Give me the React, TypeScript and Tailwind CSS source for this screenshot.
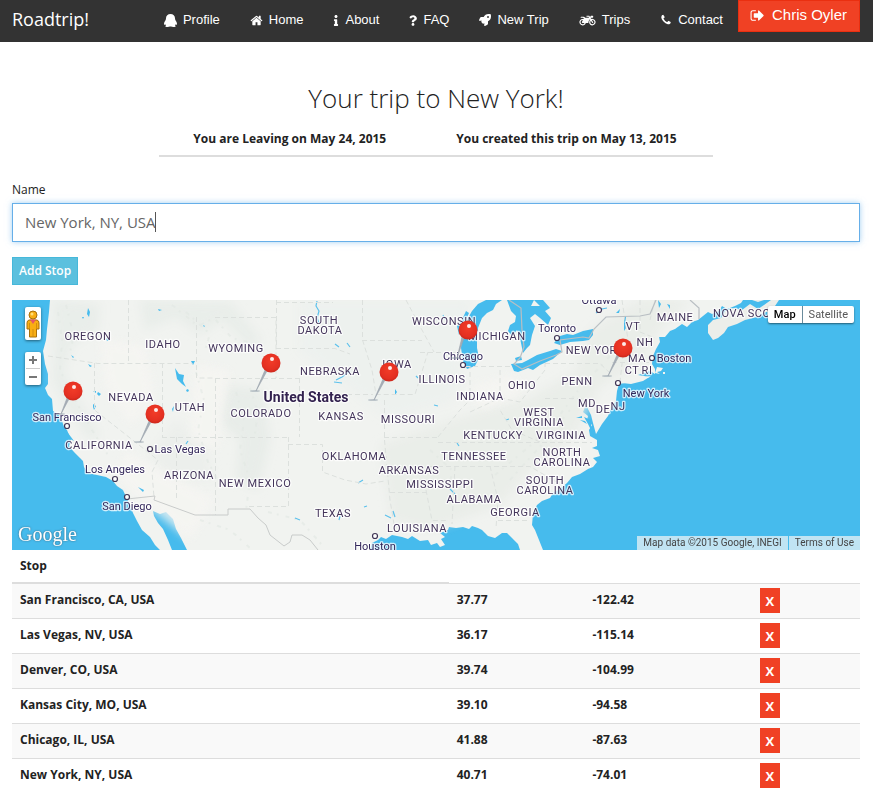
import { useState } from "react";
import type { ReactNode } from "react";
import { FaInfo, FaMotorcycle, FaQuestion, FaRocket } from "react-icons/fa";

function Glyph({ d, className }: { d: string; className: string }) {
  return (
    <svg viewBox="0 0 1792 1792" className={className} fill="currentColor" aria-hidden="true">
      <path d={d} />
    </svg>
  );
}

const HOME =
  "M1472 992v480q0 26-19 45t-45 19h-384v-384h-256v384h-384q-26 0-45-19t-19-45v-480q0-1 .5-3t.5-3l575-474 575 474q1 2 1 6zm223-69l-62 74q-8 9-21 11h-3q-13 0-21-7l-692-577-692 577q-12 8-24 7-13-2-21-11l-62-74q-8-10-7-23.5t11-21.5l719-599q32-26 76-26t76 26l244 204v-195q0-14 9-23t23-9h192q14 0 23 9t9 23v408l219 182q10 8 11 21.5t-7 23.5z";
const PHONE =
  "M1600 1240q0 27-10 70.5t-21 68.5q-21 50-122 106-94 51-186 51-27 0-53-3.5t-57.5-12.5-47-14.5-55.5-20.5-49-18q-98-35-175-83-127-79-264-216t-216-264q-48-77-83-175-3-9-18-49t-20.5-55.5-14.5-47-12.5-57.5-3.5-53q0-92 51-186 56-101 106-122 25-11 68.5-21t70.5-10q14 0 21 3 18 6 53 76 11 19 30 54t35 63.5 31 53.5q3 4 17.5 25t21.5 35.5 7 28.5q0 20-28.5 50t-62 55-62 53-28.5 46q0 9 5 22.5t8.5 20.5 14 24 11.5 19q76 137 174 235t235 174q2 1 19 11.5t24 14 20.5 8.5 22.5 5q18 0 46-28.5t53-62 55-62 50-28.5q14 0 28.5 7t35.5 21.5 25 17.5q25 15 53.5 31t63.5 35 54 30q70 35 76 53 3 7 3 21z";
const SIGN_OUT =
  "M704 1440q0 4 1 20t.5 26.5-3 23.5-10 19.5-20.5 6.5h-320q-119 0-203.5-84.5t-84.5-203.5v-704q0-119 84.5-203.5t203.5-84.5h320q13 0 22.5 9.5t9.5 22.5q0 4 1 20t.5 26.5-3 23.5-10 19.5-20.5 6.5h-320q-66 0-113 47t-47 113v704q0 66 47 113t113 47h312l11.5 1 11.5 3 8 5.5 7 9 2 13.5zm928-544q0 26-19 45l-544 544q-19 19-45 19t-45-19-19-45v-288h-448q-26 0-45-19t-19-45v-384q0-26 19-45t45-19h448v-288q0-26 19-45t45-19 45 19l544 544q19 19 19 45z";

function ProfileIcon() {
  return (
    <svg viewBox="0 0 13 13" className="h-[13px] w-[13px]" fill="currentColor" aria-hidden="true">
      <path d="M6.5 0C9.200 0 11 1.800 11 4.300c0 .8.1 1.300.5 2 .8 1.200 1.500 2.400 1.500 3.600 0 .8-.4 1.100-.9.700l-.4-.3c-.2.6-.4 1-.8 1.300.5.2.8.4.8.7 0 .5-.8.7-2.200.7-1.200 0-2-.2-2.400-.5h-1.200c-.4.3-1.200.5-2.400.5-1.400 0-2.200-.2-2.200-.7 0-.3.3-.5.8-.7-.4-.3-.6-.7-.8-1.300l-.4.3c-.5.400-.9.1-.9-.7 0-1.200.7-2.400 1.500-3.600.4-.7.5-1.200.5-2C2 1.800 3.800 0 6.500 0z" />
    </svg>
  );
}

const links: { label: string; icon: ReactNode }[] = [
  { label: "Profile", icon: <ProfileIcon /> },
  { label: "Home", icon: <Glyph d={HOME} className="h-[13px] w-[13px]" /> },
  { label: "About", icon: <FaInfo className="h-[11px] w-[6px]" /> },
  { label: "FAQ", icon: <FaQuestion className="h-[11px] w-[8px]" /> },
  { label: "New Trip", icon: <FaRocket className="h-3 w-3" /> },
  { label: "Trips", icon: <FaMotorcycle className="h-[13px] w-[17px]" /> },
  { label: "Contact", icon: <Glyph d={PHONE} className="h-[14px] w-3" /> },
];

function TopBar() {
  return (
    <header className="flex h-[42px] items-start bg-[#333] pr-[13px] pl-3 text-white">
      <a href="#" className="text-[18px] leading-[38px]">
        Roadtrip!
      </a>
      <nav className="ml-auto flex font-['Liberation_Sans',Arial,sans-serif] text-[13px]">
        {links.map((l) => (
          <a key={l.label} href="#" className="flex h-10 items-center gap-1.5 px-[15px] whitespace-nowrap">
            {l.icon}
            {l.label}
          </a>
        ))}
      </nav>
      <button className="flex h-8 items-center gap-[7px] border border-[#ea2f10] bg-[#f04124] pr-3 pb-0.5 pl-[11px] font-['Liberation_Sans',Arial,sans-serif] text-[15px] whitespace-nowrap">
        <Glyph d={SIGN_OUT} className="h-[15px] w-[15px]" />
        Chris Oyler
      </button>
    </header>
  );
}

const states: [string, number, number][] = [
  ["OREGON", 88, 340],
  ["IDAHO", 163, 348],
  ["WYOMING", 236, 352],
  ["SOUTH", 319, 324],
  ["DAKOTA", 320, 334],
  ["NEBRASKA", 330, 375],
  ["UTAH", 190, 411],
  ["NEVADA", 131, 401],
  ["CALIFORNIA", 99, 449],
  ["ARIZONA", 189, 479],
  ["NEW MEXICO", 255, 487],
  ["COLORADO", 261, 417],
  ["KANSAS", 341, 420],
  ["OKLAHOMA", 354, 460],
  ["TEXAS", 333, 517],
  ["MISSOURI", 408, 423],
  ["ARKANSAS", 409, 474],
  ["MISSISSIPPI", 440, 488],
  ["LOUISIANA", 417, 532],
  ["ALABAMA", 474, 503],
  ["GEORGIA", 515, 516],
  ["TENNESSEE", 474, 460],
  ["KENTUCKY", 493, 439],
  ["INDIANA", 480, 400],
  ["ILLINOIS", 442, 383],
  ["IOWA", 397, 368],
  ["WISCONSIN", 444, 325],
  ["MICHIGAN", 497, 340],
  ["OHIO", 522, 389],
  ["PENN", 577, 385],
  ["NEW YORK", 595, 354],
  ["WEST", 539, 416],
  ["VIRGINIA", 539, 426],
  ["VIRGINIA", 561, 439],
  ["NORTH", 562, 456],
  ["CAROLINA", 562, 466],
  ["SOUTH", 545, 484],
  ["CAROLINA", 545, 494],
  ["MD", 587, 407],
  ["DE", 603, 413],
  ["NJ", 618, 410],
  ["CT", 632, 374],
  ["RI", 647, 374],
  ["MA", 637, 362],
  ["NH", 645, 346],
  ["VT", 633, 330],
  ["MAINE", 675, 321],
  ["NOVA SCOTIA", 751, 317],
];

// name, label centre, label baseline, dot centre
const cities: [string, number, number, number, number][] = [
  ["San Francisco", 67, 421, 67, 426],
  ["Los Angeles", 115, 473, 115, 479],
  ["San Diego", 127, 510, 127, 497],
  ["Las Vegas", 180, 453, 150, 449],
  ["Chicago", 463, 360, 463, 365],
  ["Toronto", 557, 332, 557, 338],
  ["Ottawa", 599, 304, 599, 310],
  ["Boston", 674, 362, 652, 358],
  ["New York", 646, 397, 618, 383],
  ["Houston", 375, 550, 375, 536],
];

// ball centre, needle tip
const pins: [number, number, number, number][] = [
  [73, 391, 61, 414],
  [155, 414, 140, 442],
  [271, 363, 256, 391],
  [389, 372, 374, 400],
  [468, 330, 457, 358],
  [623, 348, 608, 376],
];

function MapArt() {
  return (
    <svg
      viewBox="12 300 848 250"
      preserveAspectRatio="xMidYMid slice"
      className="block h-full w-full font-[Roboto,sans-serif]"
      role="img"
      aria-label="Map of the trip across the United States"
    >
      <defs>
        <radialGradient id="ball" cx="0.5" cy="0.4" r="0.6">
          <stop offset="0" stopColor="#f23c28" />
          <stop offset="0.75" stopColor="#e43022" />
          <stop offset="1" stopColor="#cb281c" />
        </radialGradient>
        <filter id="soft" x="-30%" y="-30%" width="160%" height="160%">
          <feGaussianBlur stdDeviation="5" />
        </filter>
        <clipPath id="landClip">
          <path d="M50 300H740L660 335L655 375L618 385L598 450L534 510L500 533L380 537L370 550H160L147 534L133 513L125 493L82 461L67 429L52 399L45 380Z" />
        </clipPath>
      </defs>
      <rect x="12" y="300" width="848" height="250" fill="#46bbed" />

      {/* continent */}
      <path
        fill="#f1f3f0"
        d="M50 300L49 312L47 329L46 340L43 351L45 364L48 374L48 384L45 388L48 395L52 399L53 411L60 416L62 421L64 427L67 430L71 440L69 446L74 452L80 458L83 461L84 467L88 473L97 475L106 477L113 481L117 486L123 490L127 499L130 505L133 513L137 521L142 530L150 537L155 545L160 550H172L168 540L163 529L158 523L154 516L153 511L160 514L166 512L173 519L176 529L181 538L187 550H370L372 543L378 540L381 537L386 539L392 535L402 537L408 539L412 536L420 541L428 540L431 545L437 543L440 547L445 545L441 539L445 537L440 533L448 530L449 527L456 528L463 527L469 529L472 526L478 528L482 530L488 536L495 538L502 533L507 533L512 538L518 544L520 550H543L539 540L535 530L532 525L533 514L537 505L542 501L550 498L553 493L560 489L567 483L572 477L580 474L588 469L593 467L597 462L593 458L600 456L598 450L592 448L597 446L597 440L590 436L589 430L592 425L587 420L588 416L583 412L586 405L591 415L593 423L596 434L602 424L608 416L611 409L616 401L617 391L619 384L625 383L640 380L650 377L644 376L638 375L645 373L650 371L655 374L655 369L652 364L653 356L656 349L660 342L659 337L665 337L670 331L675 329L682 324L687 327L692 322L698 320L703 316L708 312L712 314L719 311L722 306L727 309L735 306L741 303L743 300Z"
      />
      {/* Nova Scotia and neighbours */}
      <path
        fill="#eceeea"
        d="M725 311L733 308L742 310L750 304L758 309L764 305L771 300H779L775 306L773 310L763 313L757 317L745 320L737 324L728 327L724 333L718 338L713 340L708 333L708 325L713 320L721 318ZM752 300L758 302L764 300Z"
      />
      <path fill="#f1f3f0" d="M622 383L632 379L645 377L651 376L643 381L631 384ZM657 367L663 368L661 371L657 372L660 374L655 373ZM663 372h2v2h-2z" />

      {/* relief */}
      <g clipPath="url(#landClip)">
        <g filter="url(#soft)">
          <path fill="#e6ebe7" opacity="0.7" d="M52 300L100 304L98 330L72 345L64 370L78 400L100 435L90 440L64 405L52 380L55 340Z" />
          <path fill="#e6ebe7" opacity="0.7" d="M140 300L230 302L262 340L250 348L222 320L200 335L176 318L145 330Z" />
          <path fill="#e4eae6" opacity="0.7" d="M226 385L262 390L270 440L258 490L236 480L240 440L218 420Z" />
          <path fill="#e9edea" opacity="0.6" d="M176 420L205 445L214 480L170 478L150 455Z" />
          <path fill="#e8ece7" opacity="0.8" d="M380 445L452 420L530 398L575 372L590 330L640 300L690 300L655 335L640 365L600 385L575 435L530 470L500 505L430 530L392 520Z" />
          <path fill="#ecf0ed" opacity="0.8" d="M300 300L470 300L455 400L390 420L300 350Z" />
        </g>
        <g filter="url(#soft)" fill="#f6f5f2" opacity="0.8">
          <path d="M100 340L145 345L155 400L130 425L105 385Z" />
          <path d="M125 450L160 470L215 500L190 540L150 508L118 478Z" />
          <path d="M195 365L230 370L218 450L190 440Z" />
          <path d="M470 385L515 375L520 395L480 410Z" />
        </g>
      </g>

      {/* terrain speckle */}
      <g fill="none" stroke="#e2e8e3" strokeWidth="2" strokeDasharray="4 5 2 7" opacity="0.6">
        <path d="M58 312L62 340L60 370L74 398L92 430L108 455" />
        <path d="M66 305L74 336L70 352" />
        <path d="M172 305L198 326L214 318L232 338L256 344" />
        <path d="M186 312L210 334L205 350" />
        <path d="M236 392L244 420L240 450L250 480L246 510" />
        <path d="M250 388L258 412L254 440" />
        <path d="M196 372L204 400L198 430L208 462L222 488" />
        <path d="M268 512L300 520L322 545" />
        <path d="M200 520L230 530L250 548" />
        <path d="M495 475L530 446L556 420L580 388L610 356" />
        <path d="M510 480L546 440L570 410" />
        <path d="M430 450L452 470L448 500" />
      </g>

      {/* lakes and bays */}
      <g fill="#46bbed">
        <path d="M486 300L478 304L472 311L468 318L465 325L462 335L461 348L463 361L467 369L475 366L479 358L477 348L477 338L478 328L482 318L487 313L493 310L496 304L502 300Z" />
        <path d="M457 326L461 322L466 311L469 313L464 324L459 335Z" />
        <path d="M507 300L511 311L516 316L515 322L510 325L508 331L512 336L517 330L520 338L523 353L527 348L530 345L532 335L535 326L530 318L535 314L540 318L548 325L551 318L545 311L550 308L543 300ZM534 300L540 306L531 306Z" />
        <path d="M515 358L521 356L522 360L516 361Z" />
        <path d="M511 364L514 371L518 372L528 368L533 370L540 365L553 359L562 351L556 349L550 351L537 355L528 360L522 363Z" />
        <path d="M554 343L560 336L567 334L573 335L583 331L593 329L593 335L589 340L583 341L570 342L560 345Z" />
        <path d="M175 368L179 374L184 375L183 381L186 387L182 384L177 379Z" />
        <path d="M187 389l2 1-1 2-2-1zM88 308l2 4-1 5-2-3zM82 317l2 0-1 2zM71 355l3 2-1 1zM88 364l4 2-2 1zM106 338l4 2-3 1zM93 391l3 0 0 2zM98 392l3 2-2 2-2-2zM93 404l3 2-2 4-1-3zM172 409l2-3-1 6zM191 361l4 0-2 4zM138 487l6 3-1 2zM203 325l2 1-1 1zM158 309l4 1-3 1zM65 431l3 2 3 4 3 4-4-2-3-4z" />
        <path d="M584 417l7 3 0 8 3 2-1 6-2-6-3-6zM580 420l5 1 2 3zM576 418l6-2 0 2z" />
        <path d="M624 316l2 0 0 12-2 3zM616 313l4-4-1 4zM658 300l3 4-2 4zM667 304l3 1 0 4zM395 389l2 3-2 3z" />
      </g>
      <g fill="none" stroke="#5cc1ec" strokeWidth="1.200">
        <path d="M317 301L316 306L319 311L317 318L319 323" />
        <path d="M335 344l4 3M347 343l3 4M350 371l-8 6-6 3M334 382l8 1" />
        <path d="M340 516l-1 4M385 515l6 3M393 511l2 6M295 518l5 2M364 507l3-1M358 483l5-3" />
        <path d="M416 376l2 2M434 405l4 1M450 489l5 5M457 443l2 3M506 420l3-1M188 441l-2 3" />
        <path d="M596 313l6-4 5-1M445 319l-2-4" />
      </g>

      {/* borders */}
      <g fill="none" stroke="#dce0dd" strokeWidth="1" strokeDasharray="5 3">
        <path d="M48 356L98 363.500H192.500M94.500 363V410L158 460L152 472L154 497M128.500 300V363M162.500 363V437M176.500 437V500M162 437.500H290M196.500 317V378H215M215 317.500H276V378M215.500 378V515M215 378.500H299M299.500 378V437M276 348.500H335L350 354M276.500 300V348M299 394.500H373M288.500 437V506.500H247M288 444.500H322.500V472L345 480L366 484L385 481" />
        <path d="M276 302.500H333M362.500 300V340L372 370L376 394.500H415L428 352M362 340.500H422M384.500 400V440L388 478L390 500L394 524M384 437.500H438M390 492.500H426M406 300L422 330L434 352M426 490L432 520.500H448M438 437L460 410L470 400V366M465 366.500H510M500 370V398L470 412M500 398L520 402L545 370V363M545 363.500H600L612 375M545 398.500H590M438 442.500H592M430 466.500H530L560 484M455 466L452 524M490 466L498 500L496 528M498 520.500H530M540 442L512 430L500 410" />
        <path d="M622 300L628 340M640 300V332L655 338M612 362.500H652M624 346L620 382M420 352.500H460M655 300L650 320" />
      </g>
      <path fill="none" stroke="#c8cbca" strokeWidth="1" d="M127 499L155 496L154 500L195 515H228V509H250L258 518L266 525L270 535L284 546L290 542L292 535L302 535L310 540L318 550" />
      <path fill="none" stroke="#b9bfc3" strokeWidth="1.200" d="M509 300L521 308L522 330L524 347L520 358L514 364L522 369L540 361L556 355L562 352L560 340L583 337L589 338L594 329L606 317L640 316L650 314L656 300M690 300L699 308V319" />

      {/* state names */}
      <g
        fill="#43345a"
        fontSize="11"
        textAnchor="middle"
        stroke="#ffffff"
        strokeOpacity="0.75"
        strokeWidth="2.500"
        strokeLinejoin="round"
        paintOrder="stroke"
        className="tracking-wider"
      >
        {states.map(([name, x, y]) => (
          <text key={name + x + y} x={x} y={y}>
            {name}
          </text>
        ))}
      </g>

      {cities.map(([name, , , cx, cy]) => (
        <circle key={name} cx={cx} cy={cy} r="2.500" fill="#fff" stroke="#3f3555" strokeWidth="1.200" />
      ))}
      <g fill="#33275a" fontSize="11" textAnchor="middle" stroke="#ffffff" strokeOpacity="0.75" strokeWidth="2.500" strokeLinejoin="round" paintOrder="stroke">
        {cities.map(([name, x, y]) => (
          <text key={name} x={x} y={y}>
            {name}
          </text>
        ))}
        <text x="306" y="402" fontSize="14" fontWeight="700" fill="#33224f">
          United States
        </text>
      </g>

      {pins.map(([x, y, tx, ty]) => (
        <g key={x}>
          <ellipse cx={tx - 1} cy={ty} rx="5" ry="1" fill="#8b9aa5" opacity="0.5" />
          <path d={`M${x - 6} ${y + 7}L${tx} ${ty}L${x - 4} ${y + 8}Z`} fill="#a5adb5" stroke="#9aa3ac" strokeWidth="0.600" />
          <circle cx={x} cy={y} r="9.500" fill="url(#ball)" />
          <circle cx={x + 1} cy={y - 4} r="2" fill="#fff" opacity="0.9" />
        </g>
      ))}
    </svg>
  );
}

function Pegman() {
  return (
    <svg viewBox="0 0 14 28" className="h-7 w-3.5" aria-hidden="true">
      <path
        d="M3 10Q1 10.500 1 13V19H3.500V27H10.500V19H13V13Q13 10.500 11 10Z"
        fill="#f8ae14"
        stroke="#a8700b"
        strokeWidth="1"
      />
      <path d="M4 9.500H10L7 14Z" fill="#e4576b" />
      <path d="M7 19V27M3.500 13V19M10.500 13V19" stroke="#c9850c" strokeWidth="0.800" />
      <circle cx="7" cy="5" r="4" fill="#f8ae14" stroke="#a8700b" />
      <circle cx="6" cy="4" r="1.500" fill="#ffdf7a" />
    </svg>
  );
}

function TripMap() {
  return (
    <section className="relative h-[250px] overflow-hidden font-[Roboto,sans-serif]">
      <MapArt />
      <button aria-label="Street View" className="absolute top-[7px] left-[13px] flex h-[33px] w-4 items-center justify-center rounded-xs bg-white shadow-[0_1px_3px_rgba(0,0,0,0.5)]">
        <Pegman />
      </button>
      <div className="absolute top-[52px] left-[13px] flex w-4 flex-col items-center rounded-xs bg-white text-[#777] shadow-[0_1px_3px_rgba(0,0,0,0.5)]">
        <button aria-label="Zoom in" className="flex h-4 items-center">
          <svg viewBox="0 0 8 8" className="h-2 w-2" aria-hidden="true">
            <path d="M3 0h2v3h3v2H5v3H3V5H0V3h3z" fill="currentColor" />
          </svg>
        </button>
        <span className="h-px w-3.5 bg-[#ccc]" />
        <button aria-label="Zoom out" className="flex h-4 items-center">
          <svg viewBox="0 0 8 8" className="h-2 w-2" aria-hidden="true">
            <path d="M0 3h8v2H0z" fill="currentColor" />
          </svg>
        </button>
      </div>
      <div className="absolute top-1.5 right-1.5 flex h-[17px] rounded-xs bg-white text-[11px] leading-[17px] shadow-[0_1px_2px_rgba(0,0,0,0.5)]">
        <button className="px-1.5 font-medium text-black">Map</button>
        <button className="border-l border-[#6a8b9c] px-1.5 text-[#565656]">Satellite</button>
      </div>
      <div className="absolute bottom-2 left-1.5 font-['Liberation_Serif','Times_New_Roman',serif] text-[20px] leading-4 text-white [text-shadow:0_0_2px_rgba(60,80,95,0.9)]">
        Google
      </div>
      <div className="absolute right-0 bottom-0 flex gap-px text-[10px] leading-[14px] text-[#444]">
        <span className="bg-[#c0e4f3] px-1.5">Map data ©2015 Google, INEGI</span>
        <a href="#" className="bg-[#c0e4f3] px-1.5">
          Terms of Use
        </a>
      </div>
    </section>
  );
}

const stops = [
  { name: "San Francisco, CA, USA", lat: "37.77", lng: "-122.42" },
  { name: "Las Vegas, NV, USA", lat: "36.17", lng: "-115.14" },
  { name: "Denver, CO, USA", lat: "39.74", lng: "-104.99" },
  { name: "Kansas City, MO, USA", lat: "39.10", lng: "-94.58" },
  { name: "Chicago, IL, USA", lat: "41.88", lng: "-87.63" },
  { name: "New York, NY, USA", lat: "40.71", lng: "-74.01" },
];

function StopTable() {
  return (
    <table className="w-full table-fixed border-collapse text-left text-[12px] leading-[18px] font-bold text-[#222]">
      <colgroup>
        <col className="w-[51.500%]" />
        <col className="w-[16%]" />
        <col className="w-[19.750%]" />
        <col />
      </colgroup>
      <thead>
        <tr className="h-[33px]">
          <th scope="col" className="border-b-2 border-[#ddd] px-2 align-middle">
            Stop
          </th>
        </tr>
      </thead>
      <tbody>
        {stops.map((s) => (
          <tr key={s.name} className="h-[35px] border-t border-[#ddd] odd:bg-[#f9f9f9]">
            <td className="px-2 pb-0.5">{s.name}</td>
            <td className="px-2 pb-0.5">{s.lat}</td>
            <td className="px-2 pb-0.5">{s.lng}</td>
            <td className="px-2">
              <button aria-label={`Remove ${s.name}`} className="block h-[25px] w-5 bg-[#f04124] text-center text-[13px] text-white">
                X
              </button>
            </td>
          </tr>
        ))}
      </tbody>
    </table>
  );
}

export default function App() {
  const [name, setName] = useState("New York, NY, USA");
  return (
    <div className="min-h-screen bg-white font-['Open_Sans',sans-serif] text-[#222]">
      <TopBar />
      <main className="pr-[13px] pl-3">
        <h1 className="pt-[35px] text-center text-[26px] leading-[42px] font-light">Your trip to New York!</h1>
        <div className="mx-auto flex w-fit border-b-2 border-[#ddd] text-[12px] leading-[18px] font-bold">
          <p className="pt-[11px] pr-9 pb-[7px] pl-[34px]">You are Leaving on May 24, 2015</p>
          <p className="pt-[11px] pr-9 pb-[7px] pl-[34px]">You created this trip on May 13, 2015</p>
        </div>
        <form className="pt-6" onSubmit={(e) => e.preventDefault()}>
          <label htmlFor="stop" className="block text-[12px] leading-[18px]">
            Name
          </label>
          <div className="relative mt-1">
            <input
              id="stop"
              value={name}
              onChange={(e) => setName(e.target.value)}
              className="block h-[39px] w-full border border-[#66afe9] px-3 pb-0.5 text-[15px] text-[#666] shadow-[0_0_6px_rgba(102,175,233,0.6)] outline-none"
            />
            <span className="absolute top-[9px] left-[143px] h-5 w-px bg-[#555]" />
          </div>
          <button className="mt-[15px] mb-[15px] block h-7 border border-[#46b8da] bg-[#5bc0de] px-1.5 text-[12px] font-semibold text-white">
            Add Stop
          </button>
        </form>
        <TripMap />
        <StopTable />
      </main>
    </div>
  );
}
